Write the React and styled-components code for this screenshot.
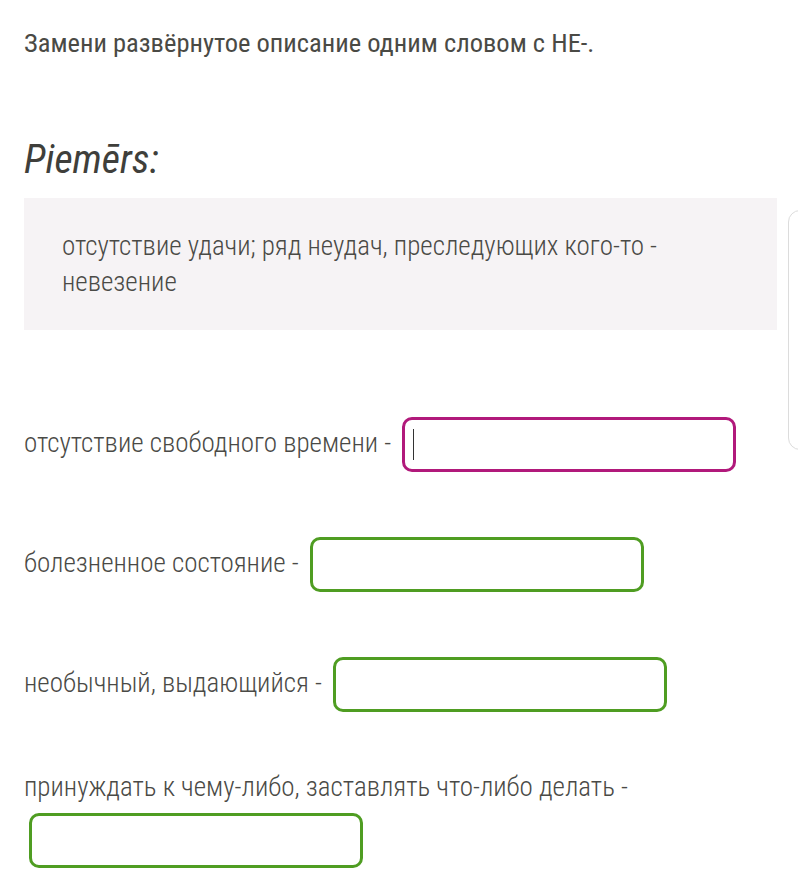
import React from "react";
import styled, { createGlobalStyle } from "styled-components";

const GlobalStyle = createGlobalStyle`
  body {
    margin: 0;
    background: #ffffff;
    font-family: "Roboto", "Liberation Sans", sans-serif;
    font-stretch: 75%;
    color: #4a4a46;
    overflow: hidden;
  }
`;

const items = [
  { text: "отсутствие свободного времени -", active: true },
  { text: "болезненное состояние -" },
  { text: "необычный, выдающийся -" },
  { text: "принуждать к чему-либо, заставлять что-либо делать -" },
];

const App = () => {
  return (
    <>
      <GlobalStyle />
      <Page>
        <Main>
          <Title>Замени развёрнутое описание одним словом с НЕ-.</Title>
          <ExampleHeading>Piemērs:</ExampleHeading>
          <ExampleBox>
            отсутствие удачи; ряд неудач, преследующих кого-то - невезение
          </ExampleBox>
          <Tasks>
            {items.map((item) => (
              <Row key={item.text}>
                {item.text}{" "}
                <Field $active={item.active}>
                  {item.active && <Caret />}
                </Field>
              </Row>
            ))}
          </Tasks>
        </Main>
        <SideCard />
      </Page>
    </>
  );
};

export default App;

const Page = styled.div`
  display: flex;
  align-items: flex-start;
  gap: 11px;
  padding-left: 24px;
  width: 900px;
`;

const Main = styled.div`
  width: 753px;
  flex-shrink: 0;
`;

const Title = styled.h1`
  margin: 23px 0 0;
  font-size: 26.5px;
  font-weight: 400;
  line-height: 40px;
  color: #4a4a45;
`;

const ExampleHeading = styled.h2`
  margin: 75px 0 0;
  font-size: 40px;
  font-style: italic;
  font-weight: 400;
  line-height: 44px;
  color: #3f3f3b;
`;

const ExampleBox = styled.div`
  margin-top: 16px;
  background: #f6f3f5;
  padding: 30px 38px;
  font-size: 27px;
  font-weight: 300;
  line-height: 36px;
  color: #4a4a46;
`;

const Tasks = styled.div`
  margin-top: 79px;
  display: flex;
  flex-direction: column;
  gap: 49px;
`;

const Row = styled.p`
  margin: 0;
  font-size: 27px;
  font-weight: 300;
  line-height: 36px;
  color: #4a4a46;
`;

const Field = styled.span`
  display: inline-block;
  vertical-align: middle;
  box-sizing: border-box;
  width: 334px;
  height: 55px;
  margin: 8px 5px;
  border: 3px solid ${(p) => (p.$active ? "#b1197b" : "#4f9d22")};
  border-radius: 10px;
  background: #fff;
  padding: 9px 8px;
`;

const Caret = styled.span`
  display: block;
  width: 1px;
  height: 31px;
  background: #333;
`;

const SideCard = styled.div`
  flex-shrink: 0;
  margin-top: 210px;
  width: 60px;
  height: 238px;
  border: 1px solid #dcdcdc;
  border-radius: 12px;
`;
